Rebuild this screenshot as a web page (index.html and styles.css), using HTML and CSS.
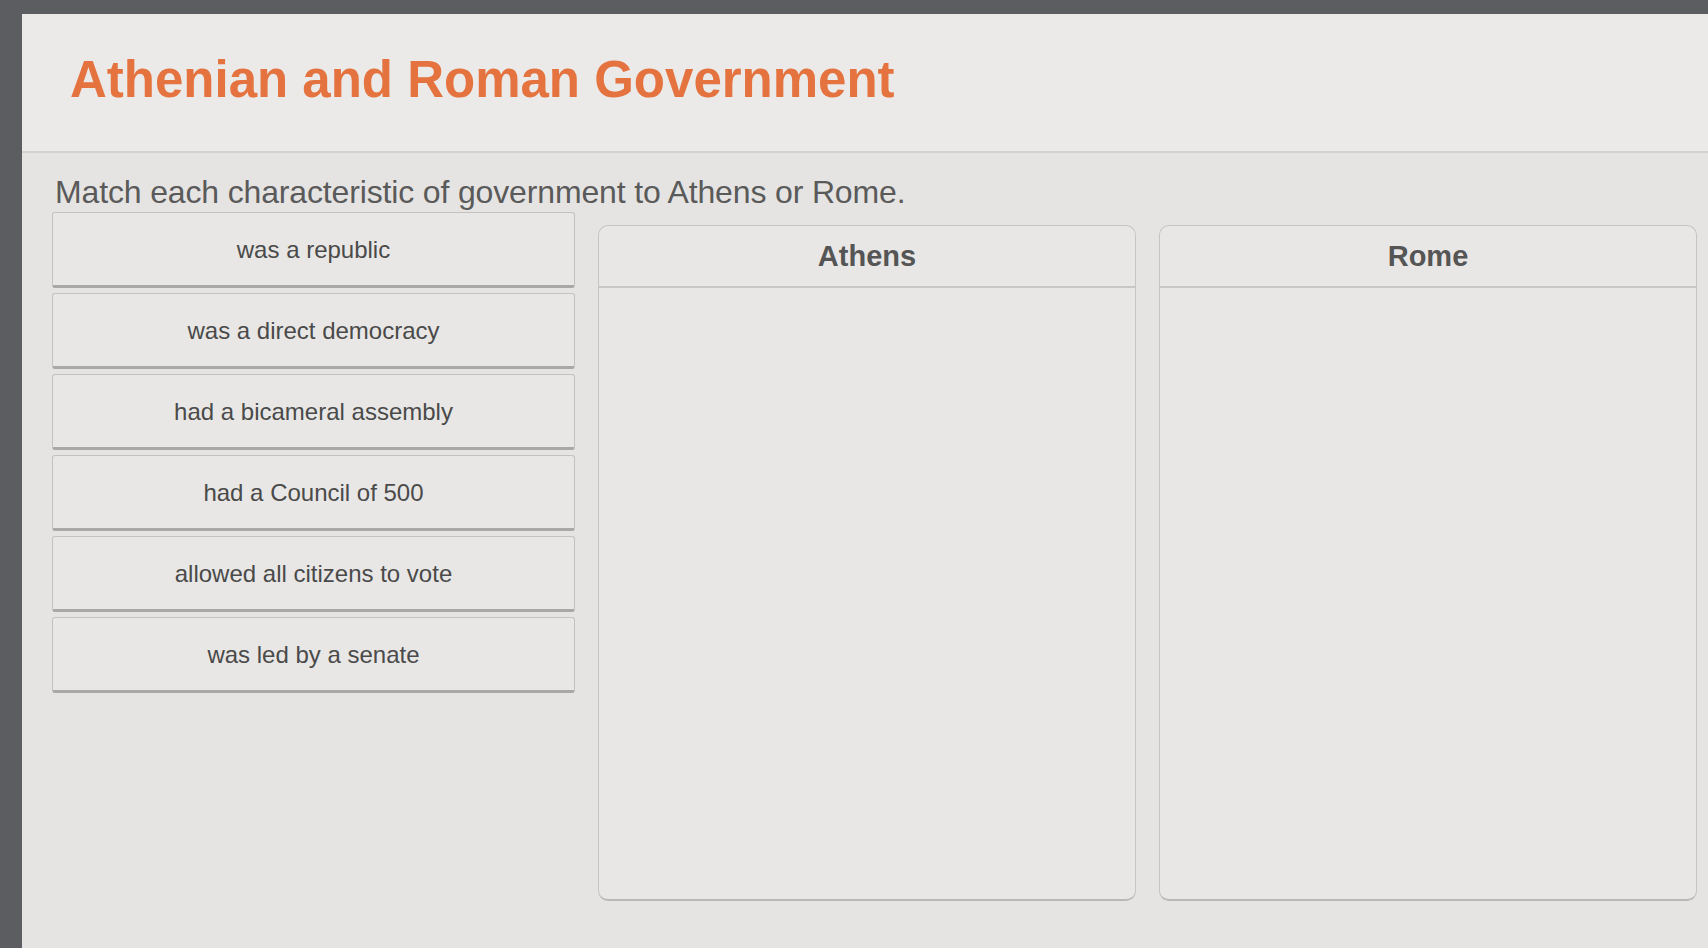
FILE: index.html
```html
<!DOCTYPE html>
<html lang="en">
<head>
  <meta charset="UTF-8">
  <meta name="viewport" content="width=device-width, initial-scale=1.0">
  <title>Athenian and Roman Government</title>
  <link rel="stylesheet" href="styles.css">
</head>
<body>

<div class="screen">
  <div class="page">
    <header class="lesson-head">
      <h1 class="lesson-title">Athenian and Roman Government</h1>
    </header>

    <main class="activity">
      <p class="prompt">Match each characteristic of government to Athens or Rome.</p>

      <div class="board">
        <!-- draggable answer tiles -->
        <ul class="tiles">
          <li class="tile">was a republic</li>
          <li class="tile">was a direct democracy</li>
          <li class="tile">had a bicameral assembly</li>
          <li class="tile">had a Council of 500</li>
          <li class="tile">allowed all citizens to vote</li>
          <li class="tile">was led by a senate</li>
        </ul>

        <!-- drop targets -->
        <section class="bin">
          <h2 class="bin-head">Athens</h2>
          <div class="bin-body"></div>
        </section>
        <section class="bin">
          <h2 class="bin-head">Rome</h2>
          <div class="bin-body"></div>
        </section>
      </div>
    </main>
  </div>
</div>

</body>
</html>
```

FILE: styles.css
```css
html, body {
  margin: 0;
  padding: 0;
  height: 100%;
}
body {
  font-family: "Liberation Sans", Arial, sans-serif;
  background-color: #5b5d60;
}
.screen {
  height: 100%;
  padding: 14px 0 0 22px;
  box-sizing: border-box;
}
.page {
  height: 100%;
  background-color: #e5e4e2;
  display: flex;
  flex-direction: column;
}

/* 标题栏 */
.lesson-head {
  background-color: #ebeae8;
  border-bottom: 2px solid #d2d1cf;
  height: 139px;
  padding: 0 0 0 48px;
  box-sizing: border-box;
}
.lesson-title {
  margin: 0;
  padding-top: 38px;
  font-size: 51px;
  font-weight: bold;
  color: #e4733f;
  line-height: 56px;
}

/* 题目区 */
.activity {
  flex: 1;
  padding: 0 11px 0 30px;
}
.prompt {
  margin: 20px 0 0 3px;
  font-size: 32px;
  line-height: 38px;
  color: #5a5a5a;
  letter-spacing: -0.15px;
}
.board {
  display: grid;
  grid-template-columns: 523px 1fr 1fr;
  column-gap: 23px;
  align-items: start;
  margin-top: 1px;
}
.tiles {
  list-style: none;
  margin: 0;
  padding: 0;
  display: flex;
  flex-direction: column;
  gap: 5px;
}
.tile {
  height: 76px;
  box-sizing: border-box;
  display: flex;
  align-items: center;
  justify-content: center;
  background-color: #e8e7e5;
  border: 1px solid #c3c2c0;
  border-bottom: 3px solid #a9a8a6;
  border-radius: 3px;
  font-size: 24px;
  color: #4a4a4a;
  padding-top: 1px;
}

.bin {
  margin-top: 13px;
  height: 673px;
  display: flex;
  flex-direction: column;
  background-color: #e8e7e6;
  border: 1px solid #c6c5c3;
  border-bottom: 2px solid #b9b8b6;
  border-radius: 10px;
  overflow: hidden;
}
.bin-head {
  margin: 0;
  height: 62px;
  flex: none;
  display: flex;
  align-items: center;
  justify-content: center;
  font-size: 29px;
  font-weight: bold;
  color: #555;
  border-bottom: 2px solid #c8c7c5;
  box-sizing: border-box;
}
.bin-body {
  flex: 1;
}
```
